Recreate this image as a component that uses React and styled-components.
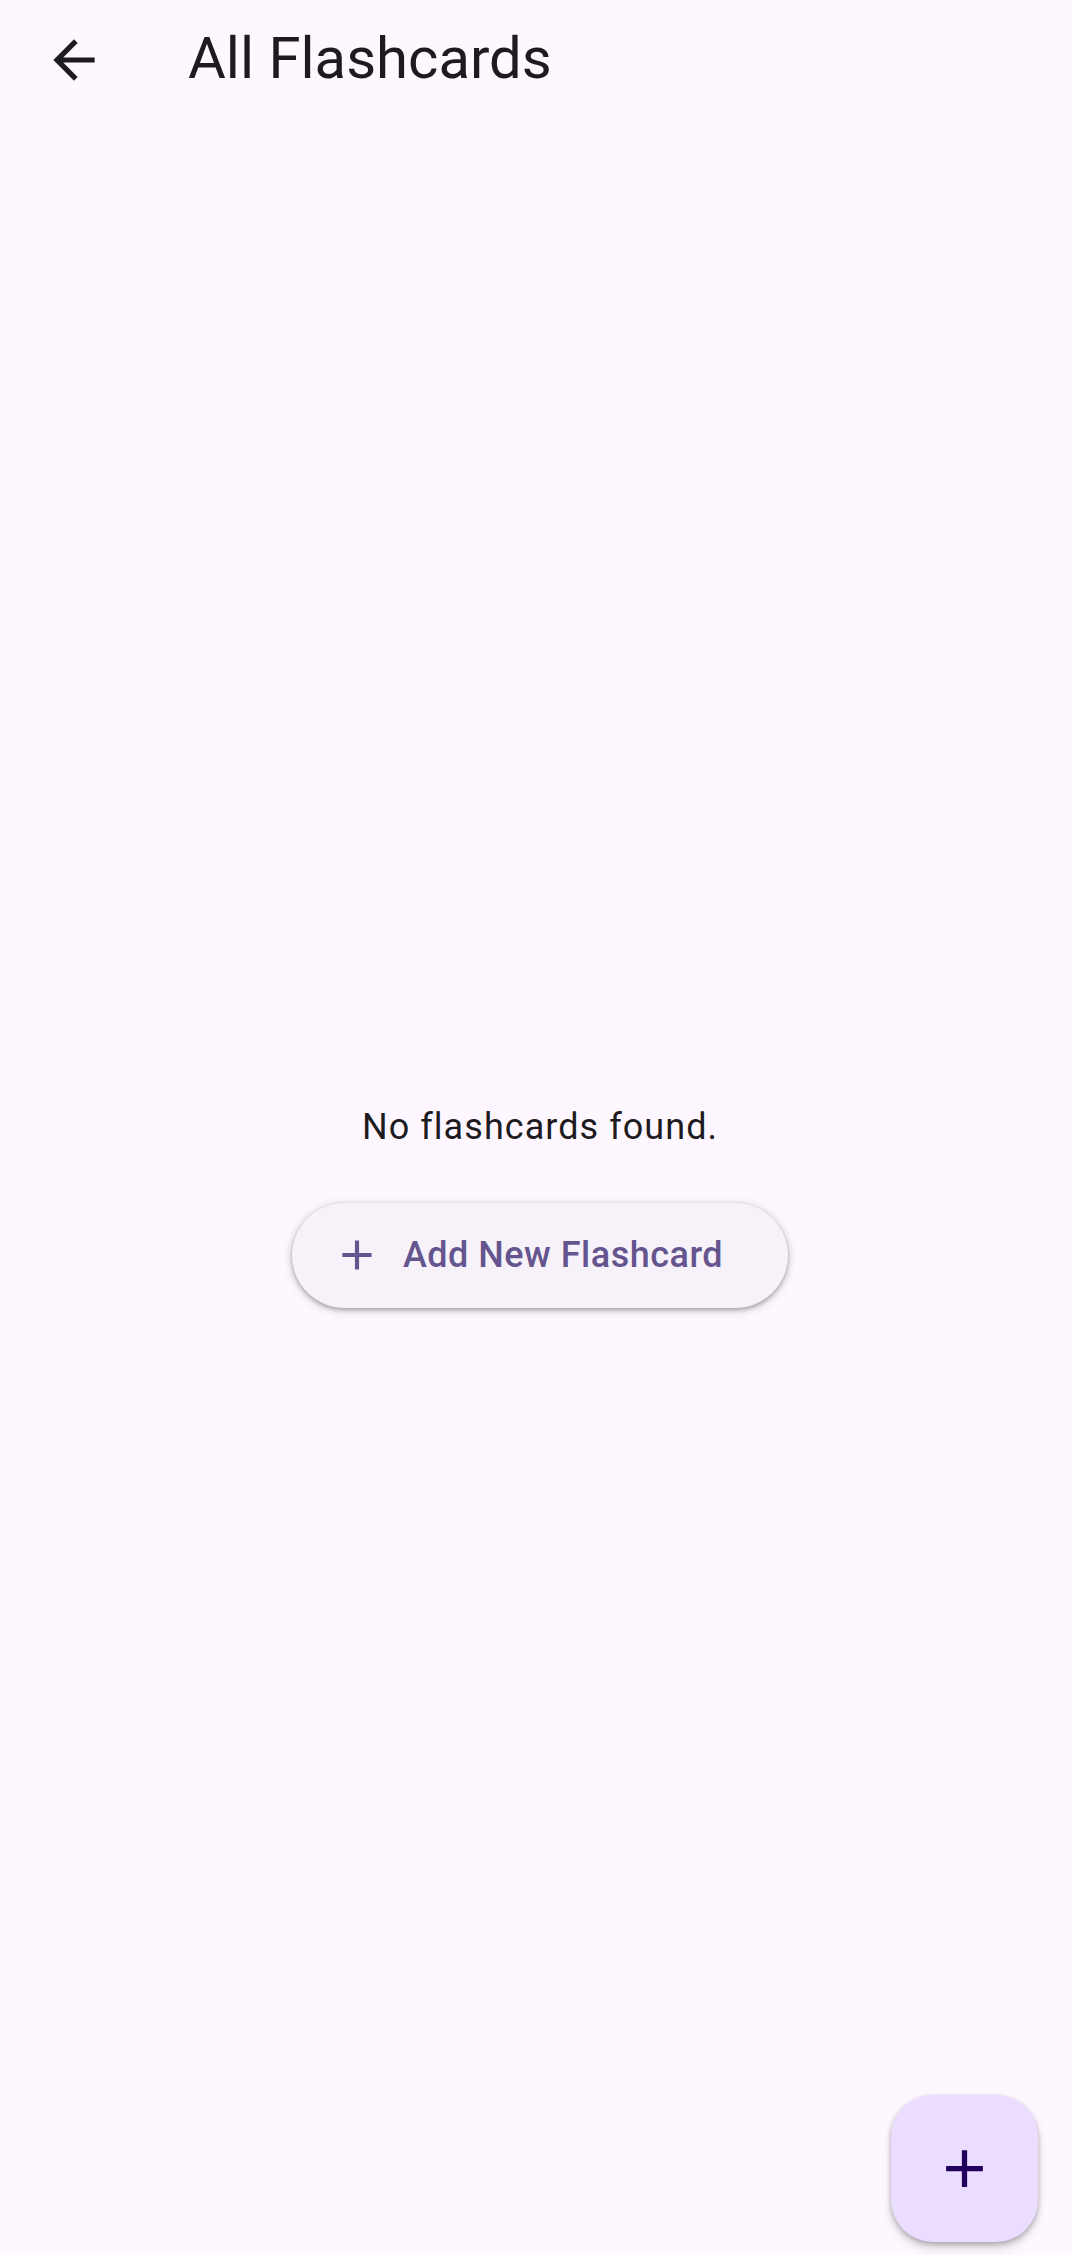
import React from "react"
import styled, { createGlobalStyle } from "styled-components"

const GlobalStyle = createGlobalStyle`
  html, body {
    margin: 0;
    padding: 0;
    background: #fef7ff;
  }
  body {
    font-family: Roboto, "Noto Sans", "Liberation Sans", sans-serif;
    color: #1d1b20;
  }
`

const Page = styled.div`
  position: relative;
  width: 1072px;
  height: 2255px;
  display: flex;
  flex-direction: column;
  background: #fef7ff;
  overflow: hidden;
`

const AppBar = styled.header`
  height: 119px;
  display: flex;
  align-items: center;
  padding-left: 43px;
  flex-shrink: 0;
`

const IconButton = styled.button`
  width: 62px;
  height: 62px;
  padding: 0;
  border: none;
  background: transparent;
  display: flex;
  align-items: center;
  justify-content: center;
  color: #1d1b20;
`

const Title = styled.h1`
  margin: 0 0 4px 83px;
  font-size: 58px;
  font-weight: 400;
  line-height: 1;
  color: #1d1b20;
`

const Body = styled.main`
  flex: 1;
  display: flex;
  flex-direction: column;
  align-items: center;
  justify-content: center;
  padding: 34px 0 0 8px;
`

const EmptyText = styled.p`
  margin: 0;
  font-size: 36px;
  line-height: 52px;
  letter-spacing: 1.05px;
  color: #1d1b20;
`

const AddButton = styled.button`
  margin-top: 50px;
  height: 105px;
  padding: 0 65px 0 40px;
  border: none;
  border-radius: 53px;
  background: #f7f2fa;
  color: #65558f;
  display: flex;
  align-items: center;
  gap: 21px;
  font-family: inherit;
  font-size: 36px;
  font-weight: 500;
  letter-spacing: 0.5px;
  box-shadow: 0 2px 4px rgba(0, 0, 0, 0.28), 0 2px 8px 2px rgba(0, 0, 0, 0.12);
`

const Fab = styled.button`
  position: absolute;
  right: 34px;
  bottom: 13px;
  width: 147px;
  height: 147px;
  border: none;
  border-radius: 42px;
  background: #eaddff;
  color: #21005d;
  display: flex;
  align-items: center;
  justify-content: center;
  box-shadow: 0 6px 10px rgba(0, 0, 0, 0.16), 0 2px 5px rgba(0, 0, 0, 0.22);
`

const BackIcon = () => (
  <svg width="62" height="62" viewBox="0 0 24 24" fill="currentColor">
    <path d="M20 11H7.83l5.59-5.59L12 4l-8 8 8 8 1.41-1.41L7.83 13H20v-2z" />
  </svg>
)

const PlusIcon = ({ size }) => (
  <svg width={size} height={size} viewBox="0 0 24 24" fill="currentColor">
    <path d="M19 13h-6v6h-2v-6H5v-2h6V5h2v6h6v2z" />
  </svg>
)

const App = () => (
  <Page>
    <GlobalStyle />
    <AppBar>
      <IconButton aria-label="Back">
        <BackIcon />
      </IconButton>
      <Title>All Flashcards</Title>
    </AppBar>
    <Body>
      <EmptyText>No flashcards found.</EmptyText>
      <AddButton>
        <PlusIcon size={50} />
        Add New Flashcard
      </AddButton>
    </Body>
    <Fab aria-label="Add">
      <PlusIcon size={63} />
    </Fab>
  </Page>
)

export default App
